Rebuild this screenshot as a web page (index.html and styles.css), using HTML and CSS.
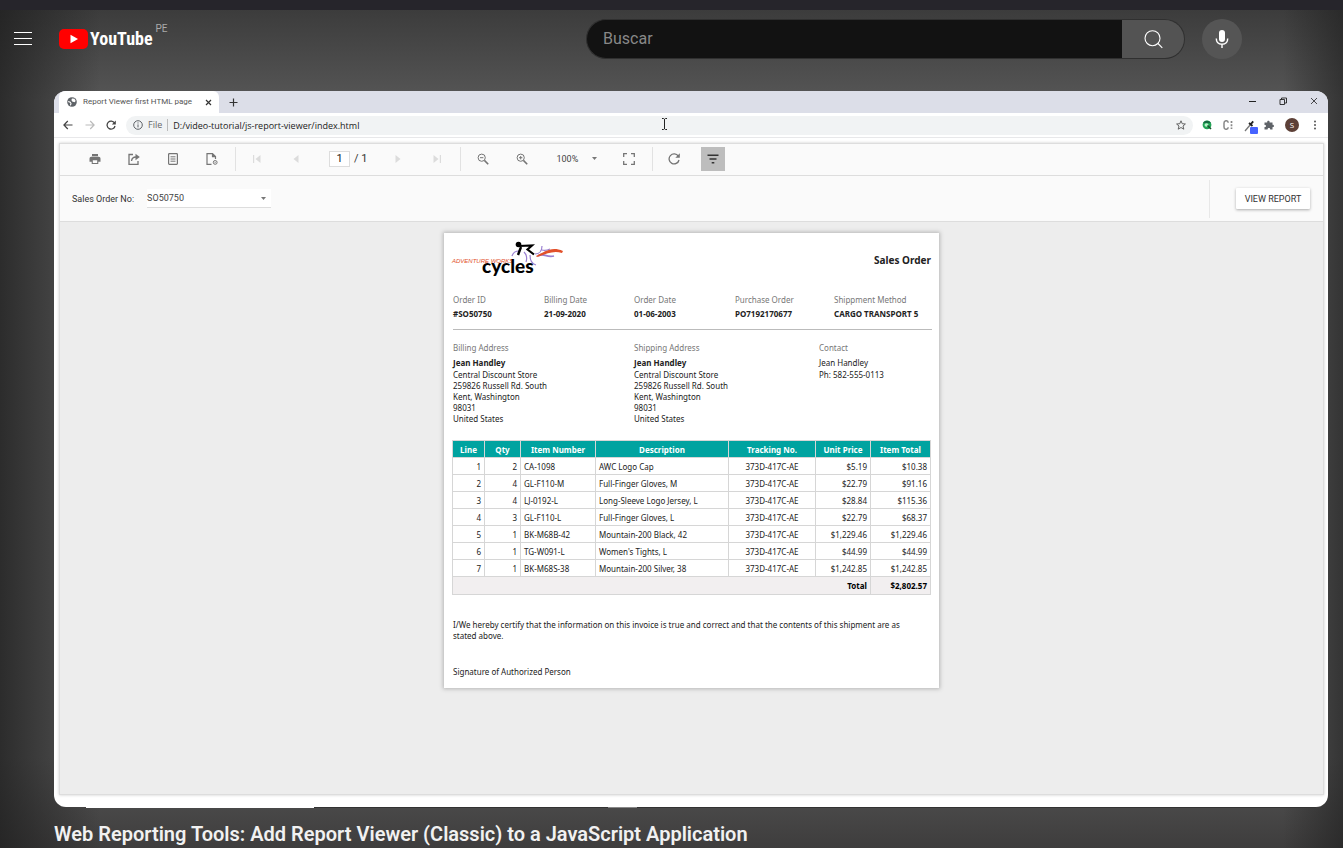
FILE: index.html
```html
<!DOCTYPE html>
<html lang="es">
<head>
<meta charset="utf-8">
<title>Web Reporting Tools - YouTube</title>
<link rel="stylesheet" href="styles.css">
</head>
<body>
<div class="window-strip"></div>
<div class="app">
  <header class="masthead">
    <div class="brand">
      <button class="menu" aria-label="Menú"><svg width="20" height="15" viewBox="0 0 20 15"><path d="M1 .5h18M1 6.500h18M1 12.500h18" stroke="#fff" stroke-width="1"/></svg></button>
      <a class="logo" href="#">
        <svg width="29" height="20" viewBox="0 0 29 20"><rect width="29" height="20" rx="5" fill="#f00"/><path d="M11.500 5.800v8.400l7.500-4.200z" fill="#fff"/></svg>
        <span class="wordmark">YouTube</span>
        <span class="country">PE</span>
      </a>
    </div>
    <form class="search">
      <input class="query" type="text" placeholder="Buscar" aria-label="Buscar">
      <button class="go" type="button" aria-label="Buscar"><svg width="20" height="20" viewBox="0 0 20 20" fill="none" stroke="#fff" stroke-width="1.100"><circle cx="9.500" cy="9.200" r="7.500"/><path d="M15 14.500l4.300 4.300"/></svg></button>
      <button class="mic" type="button" aria-label="Buscar con la voz"><svg width="16" height="20" viewBox="0 0 16 20"><rect x="5" y="1" width="6" height="12" rx="3" fill="#fff"/><path d="M2.300 9.500c0 3.700 2.300 5.800 5.700 5.800s5.700-2.100 5.700-5.800M8 15.300V19" fill="none" stroke="#fff" stroke-width="1.400"/></svg></button>
    </form>
  </header>

  <main class="player">
    <div class="browser">
      <div class="tabs">
        <div class="tab">
          <svg width="10" height="10" viewBox="0 0 10 10"><circle cx="5" cy="5" r="4.800" fill="#5f6368"/><path d="M1.200 4.500l2 .8.800 1.200-.6 1.800" stroke="#fff" stroke-width="1.100" fill="none"/><path d="M5 1.500l2.500.3L8.700 4 7.500 5.200 5.200 4.600 4.400 3z" fill="#fff"/></svg>
          <span class="tab-title">Report Viewer first HTML page</span>
          <button class="tiny" aria-label="Close tab"><svg width="7" height="7" viewBox="0 0 7 7"><path d="M1 1l5 5M6 1L1 6" stroke="#333" stroke-width="1.200"/></svg></button>
        </div>
        <button class="tiny new-tab" aria-label="New tab"><svg width="9" height="9" viewBox="0 0 9 9"><path d="M4.500 .5v8M.5 4.500h8" stroke="#333" stroke-width="1.200"/></svg></button>
        <div class="window-buttons">
          <button class="tiny" aria-label="Minimize"><svg width="8" height="8" viewBox="0 0 8 8"><path d="M1 4.500h7" stroke="#222"/></svg></button>
          <button class="tiny" aria-label="Restore"><svg width="8" height="8" viewBox="0 0 8 8" fill="none" stroke="#222" stroke-width=".9"><path d="M1 2.500h4.500v5H1zM2.500 2.500v-1.500h5v5H6"/></svg></button>
          <button class="tiny" aria-label="Close"><svg width="8" height="8" viewBox="0 0 8 8"><path d="M1 1l6 6M7 1L1 7" stroke="#222" stroke-width=".8"/></svg></button>
        </div>
      </div>
      <div class="address-row">
        <div class="nav">
          <button class="tiny" aria-label="Back"><svg width="10" height="10" viewBox="0 0 10 10" fill="none" stroke="#444" stroke-width="1.200"><path d="M9.500 5H1M4.800 1L.9 5l3.900 4"/></svg></button>
          <button class="tiny" aria-label="Forward"><svg width="10" height="10" viewBox="0 0 10 10" fill="none" stroke="#bbb" stroke-width="1.200"><path d="M.5 5H9M5.200 1l3.900 4-3.900 4"/></svg></button>
          <button class="tiny" aria-label="Reload"><svg width="10" height="10" viewBox="0 0 10 10" fill="none" stroke="#444" stroke-width="1.300"><path d="M8.500 3A4 4 0 1 0 9 6"/><path d="M9.800.5v4H5.800z" fill="#444" stroke="none"/></svg></button>
        </div>
        <div class="omnibox">
          <svg width="10" height="10" viewBox="0 0 10 10" fill="none" stroke="#5f6368"><circle cx="5" cy="5" r="4.300"/><path d="M5 4.400v3M5 2.400v1.100"/></svg>
          <span class="scheme">File</span>
          <input class="url" type="text" value="D:/video-tutorial/js-report-viewer/index.html" aria-label="Address">
          <svg width="10" height="10" viewBox="0 0 10 10" fill="none" stroke="#555" stroke-width=".9"><path d="M5 .8l1.200 2.900 3.200.3-2.400 2 .8 3.200L5 7.500 2.200 9.200 3 6 .6 4l3.200-.3z"/></svg>
          <svg class="caret-cursor" width="7" height="12" viewBox="0 0 7 12"><path d="M1 .5h1.500l1 .8 1-.8H6M3.500 1v10M1 11.500h1.500l1-.8 1 .8H6" fill="none" stroke="#222"/></svg>
        </div>
        <div class="extensions">
          <svg width="10" height="10" viewBox="0 0 10 10"><circle cx="5" cy="4.800" r="4.400" fill="#22a455"/><path d="M1 3c2-3 6-3 8 0" fill="#176b42"/><ellipse cx="4.500" cy="5" rx="2" ry="1.700" fill="#b8f3c9"/><path d="M5.500 5.500l3.500 3.500" stroke="#16542c" stroke-width="1.600"/></svg>
          <svg width="10" height="10" viewBox="0 0 10 10" fill="none" stroke="#888"><path d="M5.200 2.800C5 0 1 0 1 3v4c0 3 4 3 4.200.2" stroke-width="1.500"/><path d="M8.500 1v8" stroke-width="1.700" stroke-dasharray="2 1.200"/></svg>
          <svg class="picker" width="14" height="14" viewBox="0 0 14 14"><path d="M1 11l5.500-6.500" stroke="#777" stroke-width="1.300"/><path d="M5 3l3.500 3M6.500 4.500L9.200 1.400" stroke="#222" stroke-width="1.900"/><rect x="6" y="7" width="8" height="7" rx="1" fill="#4763ff"/></svg>
          <svg width="10" height="10" viewBox="0 0 10 10"><path d="M.5 2.500h2.700C2.800.200 6 .200 5.600 2.500h2.900v2.300c2-.3 2 2.700 0 2.300v2.400H6.200c.2-2-2.800-2-2.600 0H.5V7C2.600 7 2.600 4.800.5 4.900z" fill="#5f6368"/></svg>
          <span class="avatar">S</span>
          <svg width="10" height="10" viewBox="0 0 10 10" fill="#555"><circle cx="5" cy="1.500" r="1"/><circle cx="5" cy="5" r="1"/><circle cx="5" cy="8.500" r="1"/></svg>
        </div>
      </div>

      <section class="viewer">
        <div class="toolbar">
          <div class="group first">
            <button class="tool" aria-label="Print"><svg width="12" height="12" viewBox="0 0 12 12" fill="#757575"><path d="M3 1h6v2.200H3z"/><path fill-rule="evenodd" d="M2.200 3.800h7.600A1.700 1.700 0 0 1 11.500 5.500v3.200H9.300V11H2.700V8.700H.5V5.500A1.700 1.700 0 0 1 2.200 3.800zM3.800 7.200v2.700h4.400V7.200z"/></svg></button>
            <button class="tool" aria-label="Export"><svg width="12" height="12" viewBox="0 0 12 12" fill="none" stroke="#757575" stroke-width="1.300"><path d="M5 1.500H1v9.800h9V8"/><path d="M3.500 8c.3-2.500 1.800-4 4.500-4"/><path d="M7.500.800L11.800 4 7.500 7.200z" fill="#757575" stroke="none"/></svg></button>
            <button class="tool" aria-label="Page layout"><svg width="12" height="12" viewBox="0 0 12 12" fill="none" stroke="#757575" stroke-width="1.200"><rect x="1.600" y=".6" width="8.800" height="10.800" rx=".8"/><path d="M3.500 3.800h5M3.500 6h5M3.500 8.200h5" stroke-width="1"/></svg></button>
            <button class="tool" aria-label="Page setup"><svg width="12" height="12" viewBox="0 0 12 12" fill="none" stroke="#757575" stroke-width="1.200"><path d="M5.500 11.400H1V.6h5.500L9.500 3.600V6M6.500.6v3h3"/><circle cx="9.200" cy="9.400" r="1.900" stroke-width="1"/><circle cx="9.200" cy="9.400" r=".4" stroke-width=".6"/></svg></button>
          </div>
          <div class="group">
            <button class="tool" disabled aria-label="First page"><svg width="12" height="12" viewBox="0 0 12 12" fill="#dcdcdc"><path d="M2 2h1.200v8H2zM9.500 2v8L4.500 6z"/></svg></button>
            <button class="tool" disabled aria-label="Previous page"><svg width="12" height="12" viewBox="0 0 12 12" fill="#dcdcdc"><path d="M8.500 2v8l-5-4z"/></svg></button>
            <div class="pager"><input class="page-number" type="text" value="1" aria-label="Page"><span>/ 1</span></div>
            <button class="tool" disabled aria-label="Next page"><svg width="12" height="12" viewBox="0 0 12 12" fill="#dcdcdc"><path d="M3.500 2v8l5-4z"/></svg></button>
            <button class="tool" disabled aria-label="Last page"><svg width="12" height="12" viewBox="0 0 12 12" fill="#dcdcdc"><path d="M8.800 2H10v8H8.800zM2.500 2v8l5-4z"/></svg></button>
          </div>
          <div class="group wide">
            <button class="tool" aria-label="Zoom out"><svg width="12" height="12" viewBox="0 0 12 12" fill="none" stroke="#757575" stroke-width="1"><circle cx="4.700" cy="4.700" r="3.600"/><path d="M7.400 7.400l3.800 3.800" stroke-width="1.600"/><path d="M3 4.700h3.400" stroke-width="1"/></svg></button>
            <button class="tool" aria-label="Zoom in"><svg width="12" height="12" viewBox="0 0 12 12" fill="none" stroke="#757575" stroke-width="1"><circle cx="4.700" cy="4.700" r="3.600"/><path d="M7.400 7.400l3.800 3.800" stroke-width="1.600"/><path d="M3 4.700h3.400M4.700 3v3.400" stroke-width="1"/></svg></button>
            <div class="zoom"><select class="zoom-level" aria-label="Zoom"><option>100%</option></select><svg width="5" height="3" viewBox="0 0 5 3"><path d="M0 0h5L2.500 3z" fill="#777"/></svg></div>
            <button class="tool" aria-label="Fit page"><svg width="12" height="12" viewBox="0 0 12 12" fill="none" stroke="#757575" stroke-width="1.300"><path d="M.7 4V.7H4M8 .7h3.300V4M11.300 8v3.300H8M4 11.300H.7V8"/></svg></button>
          </div>
          <div class="group last">
            <button class="tool" aria-label="Refresh"><svg width="12" height="12" viewBox="0 0 12 12" fill="none" stroke="#757575" stroke-width="1.300"><path d="M10.300 3.200A5 5 0 1 0 11 7"/><path d="M11.800.300v4.500H7.300z" fill="#757575" stroke="none"/></svg></button>
            <button class="tool active" aria-label="Parameters"><svg width="12" height="12" viewBox="0 0 12 12" stroke="#333" stroke-width="1.500"><path d="M.5 2.300h11M2.500 6h7M4.700 9.700h2.600"/></svg></button>
          </div>
        </div>
        <div class="parameters">
          <label class="param-label" for="order">Sales Order No:</label>
          <div class="param-field"><select class="param-select" id="order"><option>SO50750</option></select><svg width="5" height="3" viewBox="0 0 5 3"><path d="M0 0h5L2.500 3z" fill="#777"/></svg></div>
          <div class="param-action"><button class="view-report">VIEW REPORT</button></div>
        </div>
        <div class="canvas">
          <article class="report">
            <div class="report-head">
              <svg class="cycles" width="112" height="37" viewBox="0 0 112 37">
                <g fill="none" stroke="#9a7fd0" stroke-width="1.200"><path d="M60 15c1-3 3-5 7-5M72 11c3 3 3 7 2 10M78 14c0 5 2 9 6 10"/><path d="M83 13c4 0 7-3 7-8"/><path d="M86 15c5-4 8 2 16 0" stroke-width="1.800"/><path d="M90 9c3 1 6 0 8-1"/></g>
                <path d="M84 15c9-4 15-10 27-5l-1 2c-10-3-17 2-25 4z" fill="#e2502a"/>
                <circle cx="66.500" cy="3.500" r="2.800" fill="#000"/>
                <path d="M69 6l-3 8" fill="none" stroke="#000" stroke-width="2.400"/>
                <path d="M67 5l13-.5-4.500 4 6.500 5" fill="none" stroke="#000" stroke-width="2.200"/>
                <text class="logo-top" x="0" y="22">ADVENTURE WORKS</text>
                <text class="logo-main" x="30" y="32">cycles</text>
              </svg>
              <h2 class="report-title">Sales Order</h2>
            </div>
            <dl class="meta">
              <div><dt>Order ID</dt><dd>#SO50750</dd></div>
              <div><dt>Billing Date</dt><dd>21-09-2020</dd></div>
              <div><dt>Order Date</dt><dd>01-06-2003</dd></div>
              <div><dt>Purchase Order</dt><dd>PO7192170677</dd></div>
              <div><dt>Shippment Method</dt><dd>CARGO TRANSPORT 5</dd></div>
            </dl>
            <div class="addresses">
              <div><h3>Billing Address</h3><p><strong class="name">Jean Handley</strong>Central Discount Store<br>259826 Russell Rd. South<br>Kent, Washington<br>98031<br>United States</p></div>
              <div><h3>Shipping Address</h3><p><strong class="name">Jean Handley</strong>Central Discount Store<br>259826 Russell Rd. South<br>Kent, Washington<br>98031<br>United States</p></div>
              <div><h3>Contact</h3><p><span class="name">Jean Handley</span>Ph: 582-555-0113</p></div>
            </div>
            <table class="items">
              <colgroup><col class="c-line"><col class="c-qty"><col class="c-num"><col class="c-desc"><col class="c-track"><col class="c-price"><col class="c-total"></colgroup>
              <thead><tr><th>Line</th><th>Qty</th><th>Item Number</th><th>Description</th><th>Tracking No.</th><th>Unit Price</th><th>Item Total</th></tr></thead>
              <tbody>
                <tr><td class="r">1</td><td class="r">2</td><td>CA-1098</td><td>AWC Logo Cap</td><td class="c">373D-417C-AE</td><td class="r">$5.19</td><td class="r">$10.38</td></tr>
                <tr><td class="r">2</td><td class="r">4</td><td>GL-F110-M</td><td>Full-Finger Gloves, M</td><td class="c">373D-417C-AE</td><td class="r">$22.79</td><td class="r">$91.16</td></tr>
                <tr><td class="r">3</td><td class="r">4</td><td>LJ-0192-L</td><td>Long-Sleeve Logo Jersey, L</td><td class="c">373D-417C-AE</td><td class="r">$28.84</td><td class="r">$115.36</td></tr>
                <tr><td class="r">4</td><td class="r">3</td><td>GL-F110-L</td><td>Full-Finger Gloves, L</td><td class="c">373D-417C-AE</td><td class="r">$22.79</td><td class="r">$68.37</td></tr>
                <tr><td class="r">5</td><td class="r">1</td><td>BK-M68B-42</td><td>Mountain-200 Black, 42</td><td class="c">373D-417C-AE</td><td class="r">$1,229.46</td><td class="r">$1,229.46</td></tr>
                <tr><td class="r">6</td><td class="r">1</td><td>TG-W091-L</td><td>Women's Tights, L</td><td class="c">373D-417C-AE</td><td class="r">$44.99</td><td class="r">$44.99</td></tr>
                <tr><td class="r">7</td><td class="r">1</td><td>BK-M68S-38</td><td>Mountain-200 Silver, 38</td><td class="c">373D-417C-AE</td><td class="r">$1,242.85</td><td class="r">$1,242.85</td></tr>
              </tbody>
              <tfoot><tr><td class="r" colspan="6">Total</td><td class="r">$2,802.57</td></tr></tfoot>
            </table>
            <p class="certify">I/We hereby certify that the information on this invoice is true and correct and that the contents of this shipment are as stated above.</p>
            <p class="signature">Signature of Authorized Person</p>
          </article>
        </div>
      </section>
    </div>
    <div class="progress"><span class="played"></span><span class="chapter"></span></div>
  </main>
  <h1 class="video-title">Web Reporting Tools: Add Report Viewer (Classic) to a JavaScript Application</h1>
</div>
</body>
</html>
```
FILE: styles.css
```css
* { box-sizing: border-box; }
body {
  margin: 0;
  min-height: 100vh;
  display: flex;
  flex-direction: column;
  font-family: Roboto, sans-serif;
  background: #333;
}
button, input, select { font-family: inherit; border: 0; margin: 0; padding: 0; background: none; outline: 0; }
button { display: flex; align-items: center; justify-content: center; flex: none; }
svg { display: block; flex: none; }
h1, h2, h3, p, dl, dd { margin: 0; }

.window-strip { height: 10px; background: #26252b; }
.app {
  flex: 1;
  display: flex;
  flex-direction: column;
  background:
    linear-gradient(90deg, rgba(30, 30, 30, .75), rgba(30, 30, 30, 0) 100px, rgba(30, 30, 30, 0) calc(100% - 60px), rgba(30, 30, 30, .6)),
    linear-gradient(#3c3c3c, #565656 90px, #565656 calc(100% - 90px), #3e3d3d);
}

.masthead {
  display: flex;
  justify-content: space-between;
  align-items: center;
  height: 58px;
  padding: 0 101px 0 13px;
}
.brand { display: flex; align-items: center; gap: 26px; }
.logo { display: flex; align-items: center; gap: 2px; color: #fff; text-decoration: none; }
.wordmark { font: 700 18px/24px "Roboto Condensed", "Liberation Sans Narrow", Roboto, sans-serif; }
.country { align-self: flex-start; font-size: 10px; line-height: 12px; margin: -4px 0 0 1px; color: #aaa; }
.search { display: flex; align-items: center; width: 656px; }
.query {
  flex: 1;
  min-width: 0;
  height: 40px;
  padding: 0 16px 2px;
  font-size: 16px;
  color: #fff;
  background: #121212;
  border: 1px solid #303030;
  border-right: 0;
  border-radius: 20px 0 0 20px;
}
.query::placeholder { color: #888; opacity: 1; }
.go { width: 63px; height: 40px; background: #535353; border: 1px solid #303030; border-left: 0; border-radius: 0 20px 20px 0; }
.mic { width: 40px; height: 40px; margin-left: 17px; background: #555; border-radius: 20px; }

.player { flex: 1; display: flex; flex-direction: column; margin: 23px 15px 0 54px; }
.browser {
  flex: 1;
  display: flex;
  flex-direction: column;
  padding-bottom: 12px;
  background: #fff;
  border-radius: 12px;
  overflow: hidden;
  font-family: "Open Sans", sans-serif;
}
.tiny { width: 12px; height: 12px; }
.tabs { display: flex; align-items: center; height: 22px; padding: 0 8px 0 5px; background: #dcdee8; }
.tab {
  display: flex;
  align-items: center;
  gap: 6px;
  width: 160px;
  height: 22px;
  padding: 0 5px 0 8px;
  background: #fff;
  border-radius: 6px 6px 0 0;
}
.tab-title { flex: 1; min-width: 0; font-family: Roboto, sans-serif; font-size: 8px; line-height: 12px; color: #555; white-space: nowrap; }
.new-tab { margin-left: 8px; }
.window-buttons { display: flex; gap: 19px; margin: 0 0 3px auto; }
.address-row { display: flex; align-items: center; gap: 9px; height: 25px; padding: 0 8px; border-bottom: 1px solid #e8e8ea; }
.nav { display: flex; gap: 9px; }
.nav .tiny:first-child { margin-right: 1px; }
.omnibox {
  position: relative;
  flex: 1;
  display: flex;
  align-items: center;
  gap: 5px;
  height: 19px;
  padding: 0 7px;
  background: #f1f3f4;
  border-radius: 10px;
  font-size: 9px;
}
.scheme { padding-right: 5px; color: #666; line-height: 12px; border-right: 1px solid #bbb; }
.url { flex: 1; min-width: 0; height: 14px; font-size: 9px; color: #222; }
.caret-cursor { position: absolute; left: 535px; top: 2px; }
.extensions { display: flex; align-items: center; gap: 11px; }
.picker { margin: 4px -5px 0 0; }
.avatar { width: 14px; height: 14px; border-radius: 7px; background: #5d4037; color: #fff; font-size: 8px; line-height: 14px; text-align: center; }

.viewer {
  flex: 1;
  display: flex;
  flex-direction: column;
  margin: 5px 4px 0 5px;
  background: #ededed;
  border: 1px solid #ddd;
  box-shadow: 0 0 3px #ccc;
  font-family: Roboto, sans-serif;
}
.toolbar { display: flex; align-items: center; height: 32px; padding-bottom: 2px; background: #fafafa; border-bottom: 1px solid #ddd; }
.group { display: flex; align-items: center; gap: 15px; height: 24px; padding: 0 11px 0 9px; border-right: 1px solid #e2e2e2; }
.group.first { padding-left: 23px; }
.group.wide { padding-left: 10px; }
.group.last { border-right: 0; }
.tool { width: 24px; height: 24px; }
.tool.active { background: #bdbdbd; }
.pager { display: flex; align-items: center; gap: 4px; padding: 0 4px 0 6px; font-size: 11px; color: #333; }
.page-number { width: 21px; height: 16px; border: 1px solid #ddd; background: #fff; font-size: 11px; text-align: center; color: #222; }
.zoom { display: flex; align-items: center; gap: 12px; padding: 0 5px 0 7px; }
.zoom-level { appearance: none; width: 24px; font-size: 9px; color: #444; }
.parameters { display: flex; align-items: center; gap: 13px; height: 46px; padding-left: 12px; background: #fafafa; border-bottom: 1px solid #ddd; }
.param-label { font-size: 9px; color: #333; white-space: nowrap; }
.param-field { display: flex; align-items: center; width: 124px; height: 19px; padding-right: 5px; background: #fff; border-bottom: 1px solid #ddd; }
.param-select { appearance: none; flex: 1; font-size: 9px; color: #444; }
.param-action { display: flex; align-items: center; height: 38px; margin-left: auto; padding: 0 13px 0 26px; border-left: 1px solid #e8e8e8; }
.view-report { width: 74px; height: 21px; font-size: 9px; color: #333; background: #fff; border-radius: 1px; box-shadow: 0 1px 3px #aaa; white-space: nowrap; }
.canvas { flex: 1; display: flex; justify-content: center; align-items: flex-start; padding: 11px 0; }

.report {
  width: 495px;
  padding: 8px 7px 11px 9px;
  background: #fff;
  box-shadow: 0 0 4px 1px #b5b5b5;
  font: 8px/11px "Noto Sans", sans-serif;
  color: #222;
}
.report-head { display: flex; justify-content: space-between; align-items: center; padding-right: 1px; margin-left: -1px; }
.cycles { overflow: visible; }
.logo-top { font: italic 400 6px "Liberation Sans Narrow", "Liberation Sans", sans-serif; fill: #e2502a; }
.logo-main { font: 900 19px Lato, sans-serif; fill: #000; }
.report-title { font-size: 10px; line-height: 14px; }
.meta { display: grid; grid-template-columns: 91px 90px 101px 99px 1fr; margin-top: 16px; padding-bottom: 9px; border-bottom: 1px solid #bbb; }
.meta dt { color: #777; line-height: 12px; }
.meta dd { margin-top: 2px; line-height: 12px; font-weight: 700; white-space: nowrap; }
.addresses { display: grid; grid-template-columns: 181px 185px 1fr; margin-top: 12px; }
.addresses h3 { margin-bottom: 3px; font-size: 8px; line-height: 12px; font-weight: 400; color: #777; }
.name { display: block; line-height: 12px; }
.items { width: 479px; margin: 16px 0 0 -1px; border-collapse: collapse; table-layout: fixed; }
.c-line { width: 32px; }
.c-qty { width: 36px; }
.c-num { width: 75px; }
.c-desc { width: 133px; }
.c-track { width: 87px; }
.c-price { width: 55px; }
.c-total { width: 60px; }
.items th, .items td { height: 17px; padding: 0 3px; border: 1px solid #d6d6d6; white-space: nowrap; }
.items th { padding: 0; background: #00a3a0; color: #fff; text-align: center; }
.items .r { text-align: right; }
.items .c { text-align: center; }
.items tfoot td { height: 18px; background: #f2eff0; font-weight: 700; color: #000; }
.certify { margin-top: 24px; padding-right: 12px; }
.signature { margin-top: 25px; }

.progress { display: flex; height: 1px; margin: 0 12px 0 32px; background: #333; }
.played { width: 228px; background: #fff; }
.chapter { width: 29px; margin-left: 294px; background: #888; }
.video-title { margin: 13px 54px 1px; font-size: 20px; line-height: 26px; font-weight: 600; color: #f1f1f1; white-space: nowrap; }
```
